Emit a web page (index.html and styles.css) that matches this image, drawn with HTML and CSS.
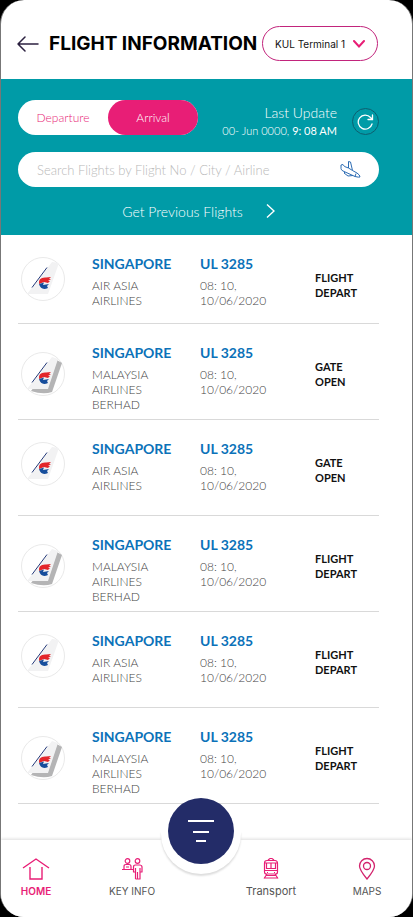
FILE: index.html
```
<!DOCTYPE html>
<html lang="en">
<head>
  <meta charset="UTF-8">
  <meta name="viewport" content="width=device-width, initial-scale=1.0">
  <title>Flight Information</title>
  <link rel="stylesheet" href="styles.css">
</head>
<body>
  <!-- shared tail fin logos -->
  <svg class="sprite" aria-hidden="true">
    <symbol id="fin" viewBox="0 0 44 44">
      <circle cx="22" cy="22" r="21.5" fill="#fff" stroke="#e9e9e9"/>
      <path d="M31 5 38 6 27 37H6Z" fill="#f2f2f3"/>
      <use href="#mark"/>
    </symbol>
    <symbol id="fin-shadow" viewBox="0 0 44 44">
      <circle cx="22" cy="22" r="21.5" fill="#fff" stroke="#e9e9e9"/>
      <path d="M34 7 41 11 31 40Q22 43 10 39Z" fill="#b4b4b5"/>
      <path d="M31 5 37 7 27 37H6Z" fill="#f2f2f3"/>
      <use href="#mark"/>
    </symbol>
    <g id="mark">
      <path d="M11 30.500 26 10.500" stroke="#263b7a" fill="none"/>
      <path d="M18 27Q17 20 25 20.500L30 20 28 22H30L27 24H29L27 26 23 25Z" fill="#e3262b"/>
      <path d="M18 27 23 25.500 22 28 28 27 26 29 27 31Q20 34 18 27Z" fill="#174e9c"/>
    </g>
  </svg>

  <div class="app">
    <header class="header">
      <button class="back" aria-label="Back">
        <svg width="22" height="16" viewBox="0 0 22 16" fill="none" stroke="#2c2140" stroke-width="1.500" stroke-linecap="round" stroke-linejoin="round"><path d="M8 1 1 8l7 7M1 8h20"/></svg>
      </button>
      <h1>FLIGHT INFORMATION</h1>
      <div class="terminal">
        <select aria-label="Terminal">
          <option>KUL Terminal 1</option>
          <option>KUL Terminal 2</option>
        </select>
        <svg width="12" height="8" viewBox="0 0 12 8" fill="none" stroke="#e81e76" stroke-width="2" stroke-linecap="round"><path d="m1 1 5 5.500L11 1"/></svg>
      </div>
    </header>

    <section class="panel">
      <div class="panel-top">
        <div class="toggle">
          <button>Departure</button>
          <button class="active">Arrival</button>
        </div>
        <div class="update">
          <p class="update-title">Last Update</p>
          <p class="update-time">00- Jun 0000, <b>9: 08 AM</b></p>
        </div>
        <button class="refresh" aria-label="Refresh">
          <svg width="17" height="18" viewBox="0 0 17 18" fill="none" stroke="#fff" stroke-width="1.300" stroke-linecap="round"><path d="M15 11A7 7 0 1 1 13.500 4.500L15.500 6.500M15.500 2v4.500H11"/></svg>
        </button>
      </div>
      <div class="search">
        <input type="text" aria-label="Search flights" placeholder="Search Flights by Flight No / City / Airline">
        <svg width="21" height="19" viewBox="0 0 21 19" fill="none" stroke="#2d6cb3" stroke-linejoin="round"><path d="M1 5v3.500q0 1.500 2 2.500l12 5.500q4 1 5 .5 0-2-3-4L12.500 10.500 10.500 2 8.500 1.500 8.500 8 4.500 6.500 3 4.500ZM8.500 8l4 2.500M5 12l-1 1 4 3 5-.5M15 16.500l1-3"/></svg>
      </div>
      <a class="previous" href="#">Get Previous Flights
        <svg width="9" height="14" viewBox="0 0 9 14" fill="none" stroke="#fff" stroke-width="1.400"><path d="m1 .5 7 6.500-7 6.500"/></svg>
      </a>
    </section>

    <main class="flights">
      <article class="flight">
        <svg class="logo"><use href="#fin"/></svg>
        <div><h2>SINGAPORE</h2><p>AIR ASIA<br>AIRLINES</p></div>
        <div><h2>UL 3285</h2><p>08: 10,<br>10/06/2020</p></div>
        <strong>FLIGHT<br>DEPART</strong>
      </article>
      <article class="flight">
        <svg class="logo logo-low"><use href="#fin-shadow"/></svg>
        <div><h2>SINGAPORE</h2><p>MALAYSIA<br>AIRLINES<br>BERHAD</p></div>
        <div><h2>UL 3285</h2><p>08: 10,<br>10/06/2020</p></div>
        <strong>GATE<br>OPEN</strong>
      </article>
      <article class="flight">
        <svg class="logo"><use href="#fin"/></svg>
        <div><h2>SINGAPORE</h2><p>AIR ASIA<br>AIRLINES</p></div>
        <div><h2>UL 3285</h2><p>08: 10,<br>10/06/2020</p></div>
        <strong>GATE<br>OPEN</strong>
      </article>
      <article class="flight">
        <svg class="logo logo-low"><use href="#fin-shadow"/></svg>
        <div><h2>SINGAPORE</h2><p>MALAYSIA<br>AIRLINES<br>BERHAD</p></div>
        <div><h2>UL 3285</h2><p>08: 10,<br>10/06/2020</p></div>
        <strong>FLIGHT<br>DEPART</strong>
      </article>
      <article class="flight">
        <svg class="logo"><use href="#fin"/></svg>
        <div><h2>SINGAPORE</h2><p>AIR ASIA<br>AIRLINES</p></div>
        <div><h2>UL 3285</h2><p>08: 10,<br>10/06/2020</p></div>
        <strong>FLIGHT<br>DEPART</strong>
      </article>
      <article class="flight">
        <svg class="logo logo-low"><use href="#fin-shadow"/></svg>
        <div><h2>SINGAPORE</h2><p>MALAYSIA<br>AIRLINES<br>BERHAD</p></div>
        <div><h2>UL 3285</h2><p>08: 10,<br>10/06/2020</p></div>
        <strong>FLIGHT<br>DEPART</strong>
      </article>
    </main>

    <nav class="nav">
      <a class="current" href="#">
        <svg width="28" height="24" viewBox="0 0 28 24" fill="none" stroke="currentColor" stroke-width="1.400"><path d="M1 11 14 2l13 9M8 10v12h12V10"/></svg>
        HOME
      </a>
      <a href="#">
        <svg width="22" height="24" viewBox="0 0 22 24" fill="none" stroke="#e81e76" stroke-width="1.200" stroke-linejoin="round"><circle cx="6.500" cy="4" r="2.300"/><circle cx="16.500" cy="4" r="2.300"/><path d="M3 12V9.500q0-2 2-2h3q2 0 2 2V12M1 12.500h11M5 10h3M14.500 22v-7h-2v-5q0-2 2-2h4q2.500 0 2.500 2v5h-2v7h-4.500M16.500 22v-7M14.500 15v-4M19 15v-4"/></svg>
        KEY INFO
      </a>
      <a class="transport" href="#">
        <svg width="16" height="24" viewBox="0 0 16 24" fill="none" stroke="#e81e76" stroke-width="1.200"><path d="M5 3 7 1.500h2L11 3M4 3.500h8q2.500 0 2.500 3V15q0 2-2 2h-9q-2 0-2-2V6.500q0-3 2.500-3ZM1.500 6h13M3.500 6v5.500h9V6M8 6v5.500M1.500 13.500h13M4 15.500h1M11 15.500h1M4 17l-3 4.500M12 17l3 4.500M3 18.500h10M1 21h14"/></svg>
        Transport
      </a>
      <a href="#">
        <svg width="18" height="24" viewBox="0 0 18 24" fill="none" stroke="#d3246d" stroke-width="1.300"><path d="M9 22Q1.500 13 1.500 9a7.500 7.500 0 0 1 15 0Q16.500 13 9 22Z"/><circle cx="9" cy="9" r="3.500"/></svg>
        MAPS
      </a>
      <div class="menu">
        <button aria-label="Filter">
          <svg width="26" height="24" viewBox="0 0 26 24" stroke="#fff" stroke-width="2"><path d="M0 2h26M5 13h16M8 22h10"/></svg>
        </button>
      </div>
    </nav>
  </div>
</body>
</html>
```
FILE: styles.css
```
* { box-sizing: border-box; }
body {
  margin: 0;
  background-color: #000;
  color: #111;
  font-family: Lato, sans-serif;
}
h1, h2, p { margin: 0; }
button, input, select { border: 0; padding: 0; font: inherit; background: none; }
a { color: inherit; text-decoration: none; }
.sprite { position: absolute; width: 0; height: 0; }

.app {
  display: flex;
  flex-direction: column;
  min-height: 100vh;
  overflow: hidden;
  background-color: #fff;
  border: 1px solid #777;
  border-width: 0 1px;
  border-radius: 24px;
}

.header {
  display: flex;
  align-items: center;
  padding: 26px 34px 18px 16px;
}
.header h1 {
  margin-left: 10px;
  color: #000;
  font: 700 19px/35px Inter, sans-serif;
  white-space: nowrap;
}
.back { display: flex; }
.terminal { position: relative; margin-left: auto; }
.terminal select {
  appearance: none;
  width: 116px;
  height: 35px;
  padding: 0 12px;
  border: 1px solid #c2247c;
  border-radius: 18px;
  color: #111;
  font: 10px Inter, sans-serif;
}
.terminal svg { position: absolute; right: 13px; top: 14px; pointer-events: none; }

.panel {
  padding: 21px 33px 0 17px;
  background-color: #009ba7;
  color: #fff;
}
.panel-top { display: flex; align-items: flex-start; }
.toggle { display: flex; background-color: #fff; border-radius: 18px; }
.toggle button {
  width: 90px;
  height: 35px;
  border-radius: 18px;
  color: #e81e76;
  font-size: 12px;
}
.toggle .active { background-color: #e81e76; color: #fff; }
.update { flex: 1; padding-top: 4px; text-align: right; }
.update-title { font-size: 14px; line-height: 18px; }
.update-time { font-size: 11px; line-height: 18px; }
.refresh {
  display: flex;
  align-items: center;
  justify-content: center;
  width: 27px;
  height: 27px;
  margin: 8px 0 0 15px;
  border: 1px solid #0d5f70;
  border-radius: 50%;
}
.search {
  display: flex;
  align-items: center;
  height: 35px;
  margin-top: 12px;
  padding: 0 18px 0 19px;
  background-color: #fff;
  border-radius: 18px;
}
.search input { flex: 1; font-size: 13px; outline: 0; }
.search input::placeholder { color: #b9b9b9; }
.previous {
  display: flex;
  align-items: center;
  justify-content: center;
  gap: 23px;
  height: 48px;
  font-size: 14px;
}

/* thin text of the panel and the rows */
.toggle, .update, .search input, .previous, .flight p { font-weight: 300; }

.flights { padding: 0 33px 0 17px; }
.flight {
  display: grid;
  grid-template-columns: 74fr 108fr 115fr 64fr;
  min-height: 96px;
  padding: 18px 0 4px;
  border-bottom: 1px solid #d9d9d9;
}
.flight:first-child { min-height: 89px; }
.flight h2 {
  margin-bottom: 3px;
  color: #0b72b9;
  font-size: 14px;
  line-height: 22px;
}
.flight p { color: #444; font-size: 12px; line-height: 15px; }
.flight strong { padding-top: 17px; font-size: 11px; line-height: 15px; }
.logo { width: 44px; height: 44px; margin: 4px 0 0 3px; }
.logo-low { margin-top: 10px; }

.nav {
  position: relative;
  display: grid;
  grid-template-columns: 70fr 122fr 156fr 36fr;
  height: 77px;
  margin-top: auto;
  padding: 17px 27px 0 0;
  background-color: #fff;
  box-shadow: 0 -1px 3px #ddd;
  color: #555;
  font: 10px/16px Inter, sans-serif;
}
.nav a {
  display: flex;
  flex-direction: column;
  align-items: center;
  gap: 2px;
}
.nav .current { color: #e81e76; font-weight: 600; }
.nav .transport { font-size: 11px; }
.menu {
  position: absolute;
  left: 50%;
  top: -9px;
  width: 80px;
  height: 43px;
  margin-left: -46px;
  border-radius: 0 0 40px 40px;
  background-color: #fff;
  box-shadow: 0 2px 2px #ddd;
}
.menu button {
  display: flex;
  align-items: center;
  justify-content: center;
  width: 66px;
  height: 66px;
  margin: -33px auto 0;
  border-radius: 50%;
  background-color: #232c68;
}
```
